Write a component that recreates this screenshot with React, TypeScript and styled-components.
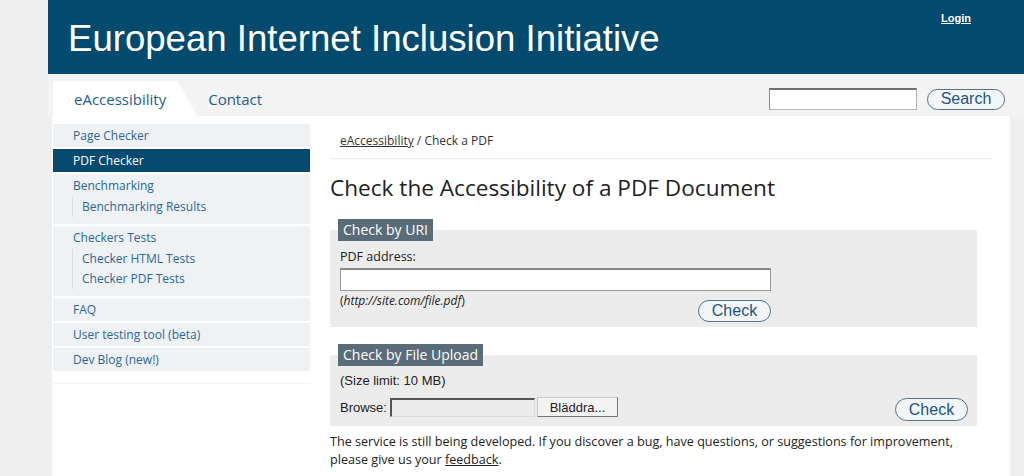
import React from "react";
import styled, { createGlobalStyle } from "styled-components";

const GlobalStyle = createGlobalStyle`
  html, body { margin: 0; padding: 0; }
  body {
    background: #efefef;
    font-family: "Open Sans", "DejaVu Sans", sans-serif;
    color: #222;
  }
`;

const Page = styled.div`
  margin-left: 48px;
  width: 976px;
  min-height: 476px;
`;

const Header = styled.header`
  height: 74px;
  background: #034a6f;
  display: flex;
  justify-content: space-between;
  align-items: flex-start;
  padding: 0 53px 0 20px;
  box-sizing: border-box;
`;

const SiteTitle = styled.h1`
  margin: 20px 0 0;
  font-family: "Liberation Sans", Arial, sans-serif;
  font-weight: normal;
  font-size: 36.6px;
  line-height: 37px;
  color: #fff;
`;

const LoginLink = styled.a`
  margin-top: 12px;
  font-family: "Liberation Sans", Arial, sans-serif;
  font-size: 11px;
  font-weight: bold;
  color: #fff;
  text-decoration: underline;
`;

const NavBar = styled.nav`
  height: 42px;
  display: flex;
  align-items: flex-end;
  justify-content: space-between;
  padding: 0 19px 0 5px;
  background: #f3f3f3;
`;

const TabList = styled.div`
  display: flex;
  align-items: flex-end;
`;

const Tab = styled.a<{ $active?: boolean }>`
  display: block;
  height: 35px;
  line-height: 37px;
  padding: ${(p) => (p.$active ? "0 31px 0 21px" : "0 11px")};
  font-size: 15px;
  color: #1f5e8e;
  text-decoration: none;
  background: ${(p) => (p.$active ? "#fff" : "transparent")};
  clip-path: ${(p) =>
    p.$active ? "polygon(0 0, calc(100% - 20px) 0, 100% 100%, 0 100%)" : "none"};
`;

const SearchForm = styled.form`
  align-self: flex-start;
  margin-top: 14px;
  display: flex;
  align-items: center;
  gap: 10px;
`;

const SearchInput = styled.input`
  box-sizing: border-box;
  width: 148px;
  height: 22px;
  border: 1px solid #b4b4b4;
  border-top: 2px solid #707070;
  border-left: 1px solid #8a8a8a;
  background: #fff;
  padding: 0 3px;
`;

const PillButton = styled.button`
  box-sizing: border-box;
  height: 22px;
  padding: 0 10px;
  border: 1px solid #56728c;
  border-radius: 12px;
  background: #f3f6f9;
  font-family: "Liberation Sans", Arial, sans-serif;
  font-size: 16px;
  line-height: 18px;
  color: #1c5686;
  cursor: pointer;
`;

const Main = styled.main`
  margin: 0 14px 0 4px;
  background: #fff;
  display: flex;
  align-items: flex-start;
  min-height: 360px;
`;

const SideNav = styled.ul`
  list-style: none;
  width: 257px;
  margin: 8px 0 0 1px;
  padding: 0 0 10px;
  flex: none;
  border-bottom: 1px solid #f4f4f4;
`;

const SideItem = styled.li<{ $group?: boolean; $active?: boolean }>`
  background: ${(p) => (p.$active ? "#064a70" : "#eef2f4")};
  margin-bottom: 2px;
  padding-bottom: ${(p) => (p.$group ? "7px" : "0")};
`;

const SideLink = styled.a<{ $active?: boolean }>`
  display: block;
  padding: 3px 0 2px 20px;
  line-height: 18px;
  font-size: 12px;
  color: ${(p) => (p.$active ? "#fff" : "#2b6799")};
  text-decoration: none;
`;

const SubList = styled.ul`
  list-style: none;
  margin: 0 0 0 19px;
  padding: 0 0 0 9px;
  border-left: 1px solid #d9dde0;
`;

const SubLink = styled.a`
  display: block;
  line-height: 20px;
  font-size: 12px;
  color: #2b6799;
  text-decoration: none;
`;

const Content = styled.section`
  flex: 1;
  padding: 16px 18px 0 20px;
`;

const Breadcrumb = styled.div`
  font-size: 12px;
  line-height: 18px;
  padding: 0 0 8px 10px;
  border-bottom: 1px solid #ececec;
  color: #333;
  a {
    color: #333;
    text-decoration: underline;
  }
`;

const PageTitle = styled.h2`
  margin: 13px 0 0;
  font-size: 22.6px;
  font-weight: normal;
  line-height: 32px;
  color: #222;
`;

const Panel = styled.div<{ $gap: number }>`
  margin: ${(p) => p.$gap}px 15px 0 0;
  background: #ececec;
  padding: 0 9px 5px 10px;
  display: flex;
  flex-direction: column;
  align-items: flex-start;
`;

const Legend = styled.div`
  margin: -11px 0 0 -2px;
  height: 22px;
  line-height: 22px;
  padding: 0 5px;
  background: #5b6c79;
  color: #fff;
  font-size: 14px;
`;

const FieldLabel = styled.label`
  margin-top: 7px;
  font-size: 12.5px;
  line-height: 18px;
  color: #222;
`;

const UrlInput = styled.input`
  box-sizing: border-box;
  margin-top: 2px;
  width: 431px;
  height: 23px;
  border: 1px solid #9a9a9a;
  border-top: 2px solid #8a8a8a;
  background: #fff;
`;

const HintRow = styled.div`
  width: 431px;
  display: flex;
  justify-content: space-between;
  align-items: flex-start;
  margin-top: 2px;
`;

const Hint = styled.span`
  font-size: 12px;
  line-height: 16px;
  font-style: italic;
  color: #222;
  b {
    font-style: normal;
    font-weight: normal;
  }
`;

const SizeNote = styled.div`
  margin-top: 7px;
  font-family: "Liberation Sans", Arial, sans-serif;
  font-size: 13px;
  line-height: 16px;
  color: #222;
`;

const UploadRow = styled.div`
  align-self: stretch;
  margin-top: 8px;
  display: flex;
  justify-content: space-between;
  align-items: flex-start;
`;

const FileGroup = styled.div`
  display: flex;
  align-items: center;
  font-family: "Liberation Sans", Arial, sans-serif;
  font-size: 13px;
  color: #222;
  height: 20px;
`;

const FileBox = styled.span`
  box-sizing: border-box;
  display: block;
  width: 145px;
  height: 19px;
  margin-left: 3px;
  background: #ececec;
  border-top: 2px solid #555;
  border-left: 2px solid #555;
  border-right: 1px solid #ddd;
  border-bottom: 1px solid #ddd;
`;

const FileButton = styled.button`
  box-sizing: border-box;
  width: 81px;
  height: 20px;
  margin-left: 2px;
  padding: 0;
  background: #f4f4f4;
  border: 1px solid #c8c8c8;
  border-right: 1px solid #777;
  border-bottom: 1px solid #777;
  font-family: "Liberation Sans", Arial, sans-serif;
  font-size: 13px;
  color: #222;
`;

const Note = styled.p`
  margin: 7px 15px 0 0;
  font-size: 12.6px;
  line-height: 18px;
  color: #222;
  a {
    color: #222;
    text-decoration: underline;
  }
`;

export default function App() {
  return (
    <>
      <GlobalStyle />
      <Page>
        <Header>
          <SiteTitle>European Internet Inclusion Initiative</SiteTitle>
          <LoginLink href="#">Login</LoginLink>
        </Header>
        <NavBar>
          <TabList>
            <Tab $active href="#">eAccessibility</Tab>
            <Tab href="#">Contact</Tab>
          </TabList>
          <SearchForm onSubmit={(e) => e.preventDefault()}>
            <SearchInput type="text" aria-label="Search" />
            <PillButton style={{ width: 78, height: 21 }}>Search</PillButton>
          </SearchForm>
        </NavBar>
        <Main>
          <SideNav>
            <SideItem>
              <SideLink href="#">Page Checker</SideLink>
            </SideItem>
            <SideItem $active>
              <SideLink $active href="#">PDF Checker</SideLink>
            </SideItem>
            <SideItem $group>
              <SideLink href="#">Benchmarking</SideLink>
              <SubList>
                <li><SubLink href="#">Benchmarking Results</SubLink></li>
              </SubList>
            </SideItem>
            <SideItem $group>
              <SideLink href="#">Checkers Tests</SideLink>
              <SubList>
                <li><SubLink href="#">Checker HTML Tests</SubLink></li>
                <li><SubLink href="#">Checker PDF Tests</SubLink></li>
              </SubList>
            </SideItem>
            <SideItem>
              <SideLink href="#">FAQ</SideLink>
            </SideItem>
            <SideItem>
              <SideLink href="#">User testing tool (beta)</SideLink>
            </SideItem>
            <SideItem>
              <SideLink href="#">Dev Blog (new!)</SideLink>
            </SideItem>
          </SideNav>
          <Content>
            <Breadcrumb>
              <a href="#">eAccessibility</a> / Check a PDF
            </Breadcrumb>
            <PageTitle>Check the Accessibility of a PDF Document</PageTitle>
            <Panel $gap={26}>
              <Legend>Check by URI</Legend>
              <FieldLabel htmlFor="pdfuri">PDF address:</FieldLabel>
              <UrlInput id="pdfuri" type="text" />
              <HintRow>
                <Hint>
                  <b>(</b>http://site.com/file.pdf<b>)</b>
                </Hint>
                <PillButton style={{ width: 73, marginTop: 7 }}>Check</PillButton>
              </HintRow>
            </Panel>
            <Panel $gap={28}>
              <Legend>Check by File Upload</Legend>
              <SizeNote>(Size limit: 10 MB)</SizeNote>
              <UploadRow>
                <FileGroup>
                  Browse:
                  <FileBox />
                  <FileButton type="button">Bläddra...</FileButton>
                </FileGroup>
                <PillButton style={{ width: 73, height: 23, marginTop: 1 }}>Check</PillButton>
              </UploadRow>
            </Panel>
            <Note>
              The service is still being developed. If you discover a bug, have questions, or
              suggestions for improvement, please give us your <a href="#">feedback</a>.
            </Note>
          </Content>
        </Main>
      </Page>
    </>
  );
}
